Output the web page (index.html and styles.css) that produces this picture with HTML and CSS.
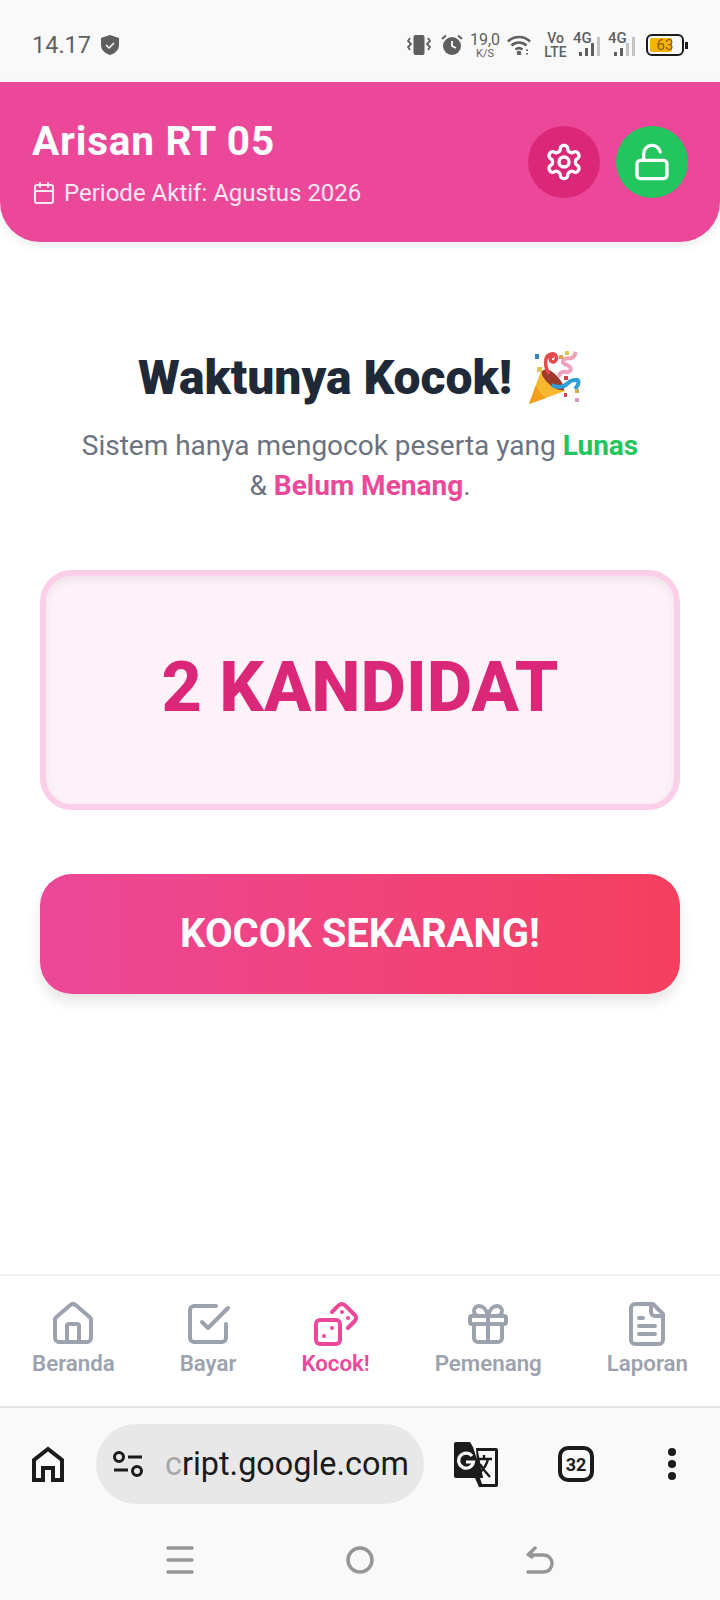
FILE: index.html
```html
<!DOCTYPE html>
<html lang="en">
<head>
    <meta charset="UTF-8">
    <meta name="viewport" content="width=device-width, initial-scale=1.0">
    <title>Arisan RT 05</title>
    <link rel="stylesheet" href="styles.css">
</head>
<body>
    <!-- android status bar -->
    <div class="status-bar">
        <div class="status-left">
            <span class="clock">14.17</span>
            <svg class="shield" viewBox="0 0 18 20"><path d="M9 0l9 3v7c0 5-4 8.500-9 10-5-1.500-9-5-9-10V3z" fill="#5f5f5f"/><path d="M5 10l3 3 5-5" fill="none" stroke="#fff" stroke-width="1.500"/></svg>
        </div>
        <div class="status-right">
            <svg class="st-vib" viewBox="0 0 24 22" fill="#5f5f5f"><rect x="6.500" y="1" width="11" height="20" rx="2"/><path d="M3 4L1 7l3 3-3 3 2 3M21 4l2 3-3 3 3 3-2 3" fill="none" stroke="#5f5f5f" stroke-width="1.800"/></svg>
            <svg class="st-alarm" viewBox="0 0 22 22"><circle cx="11" cy="12" r="9" fill="#5f5f5f"/><path d="M11 7v5l4 2" fill="none" stroke="#fff" stroke-width="1.800"/><path d="M1 5l4-3.500M21 5l-4-3.500" stroke="#5f5f5f" stroke-width="2"/></svg>
            <div class="st-speed"><span class="speed-num">19,0</span><span class="speed-unit">K/S</span></div>
            <svg class="st-wifi" viewBox="0 0 24 20" fill="none" stroke="#5f5f5f" stroke-width="2.600"><path d="M1 6.500c6-6 16-6 22 0"/><path d="M4.500 10.500c4.500-4 10.500-4 15 0"/><path d="M8.500 14.500c2-1.500 5-1.500 7 0"/><circle cx="12" cy="18" r="1" fill="#5f5f5f"/><path d="M20 14.500v1.500M20 18v1.500" stroke-width="2"/></svg>
            <div class="st-volte"><span>Vo</span><span>LTE</span></div>
            <div class="st-signal">
                <span class="net">4G</span>
                <svg viewBox="0 0 22 22"><rect x="0" y="17" width="3" height="4" fill="#5f5f5f"/><rect x="6" y="13" width="3" height="8" fill="#5f5f5f"/><rect x="12" y="8" width="3" height="13" fill="#5f5f5f"/><rect x="18" y="2" width="3" height="19" fill="#c4c4c4"/></svg>
            </div>
            <div class="st-signal">
                <span class="net">4G</span>
                <svg viewBox="0 0 22 22"><rect x="0" y="17" width="3" height="4" fill="#5f5f5f"/><rect x="6" y="13" width="3" height="8" fill="#5f5f5f"/><rect x="12" y="8" width="3" height="13" fill="#c4c4c4"/><rect x="18" y="2" width="3" height="19" fill="#c4c4c4"/></svg>
            </div>
            <div class="st-battery"><div class="batt-body"><div class="batt-fill"></div><span class="batt-num">63</span></div><div class="batt-tip"></div></div>
        </div>
    </div>

    <header class="app-header">
        <div>
            <h1 class="app-title">Arisan RT 05</h1>
            <div class="app-period">
                <svg class="lucide cal" viewBox="0 0 24 24"><rect width="18" height="18" x="3" y="4" rx="2"/><path d="M16 2v4"/><path d="M8 2v4"/><path d="M3 10h18"/></svg>
                <span>Periode Aktif: Agustus 2026</span>
            </div>
        </div>
        <div class="header-btns">
            <div class="round-btn btn-settings">
                <svg class="lucide" viewBox="0 0 24 24"><path d="M12.220 2h-.44a2 2 0 0 0-2 2v.18a2 2 0 0 1-1 1.730l-.43.25a2 2 0 0 1-2 0l-.15-.08a2 2 0 0 0-2.730.73l-.22.38a2 2 0 0 0 .73 2.730l.15.1a2 2 0 0 1 1 1.720v.51a2 2 0 0 1-1 1.740l-.15.09a2 2 0 0 0-.73 2.730l.22.38a2 2 0 0 0 2.730.73l.15-.08a2 2 0 0 1 2 0l.43.25a2 2 0 0 1 1 1.730V20a2 2 0 0 0 2 2h.44a2 2 0 0 0 2-2v-.18a2 2 0 0 1 1-1.730l.43-.25a2 2 0 0 1 2 0l.15.08a2 2 0 0 0 2.730-.73l.22-.39a2 2 0 0 0-.73-2.730l-.15-.08a2 2 0 0 1-1-1.740v-.5a2 2 0 0 1 1-1.740l.15-.09a2 2 0 0 0 .73-2.730l-.22-.38a2 2 0 0 0-2.730-.73l-.15.08a2 2 0 0 1-2 0l-.43-.25a2 2 0 0 1-1-1.730V4a2 2 0 0 0-2-2z"/><circle cx="12" cy="12" r="3"/></svg>
            </div>
            <div class="round-btn btn-lock">
                <svg class="lucide" viewBox="0 0 24 24"><rect width="18" height="11" x="3" y="11" rx="2" ry="2"/><path d="M7 11V7a5 5 0 0 1 9.900-1"/></svg>
            </div>
        </div>
    </header>

    <main class="draw-page">
        <div class="draw-heading">
            <h2>Waktunya Kocok!</h2>
            <svg class="popper" viewBox="0 0 54 56">
                <path d="M1 54L13 21c8 2 18 10 24 20z" fill="#f7b731"/>
                <path d="M1 54l7-19c2 5 5 10 10 13z" fill="#f29f1c"/>
                <path d="M14 21c4-3 9-1 14 4s9 11 8 15c-5 1-11-2-16-7s-7-9-6-12z" fill="#9c3b2a"/>
                <path d="M21 24c-3-5-4-10-3-15 1-5 8-7 10-3s-3 8-5 5 0-5 3-5" fill="none" stroke="#e5484d" stroke-width="3.500"/>
                <path d="M32 27c-2-4 3-6 6-5s6-2 4-5-8-2-7-6 7-2 9-3 3-3 4-6" fill="none" stroke="#efa3bb" stroke-width="4"/>
                <path d="M24 35c6 3 12 2 16-2s7-3 9-3c3 1 1 6-2 9" fill="none" stroke="#2f9fd8" stroke-width="4"/>
                <rect x="7" y="4" width="4" height="5" fill="#3b82c4"/>
                <rect x="9" y="17" width="5" height="5" fill="#e3c34f"/>
                <rect x="31" y="5" width="4" height="4" fill="#d8a24a"/>
                <rect x="37" y="1" width="4" height="4" fill="#e3c34f"/>
                <rect x="36" y="26" width="4" height="4" fill="#d6404a"/>
                <rect x="47" y="39" width="4" height="4" fill="#c9a95a"/>
                <rect x="36" y="43" width="3" height="4" fill="#d6404a"/>
                <rect x="47" y="48" width="4" height="4" fill="#d49ac0"/>
            </svg>
        </div>
        <p class="draw-sub">Sistem hanya mengocok peserta yang <b class="txt-green">Lunas</b><br>&amp; <b class="txt-pink">Belum Menang</b>.</p>
        <div class="candidate-card">2 KANDIDAT</div>
        <div class="draw-btn">KOCOK SEKARANG!</div>
    </main>

    <nav class="bottom-nav">
        <div class="nav-item">
            <svg class="lucide" viewBox="0 0 24 24"><path d="M15 21v-8a1 1 0 0 0-1-1h-4a1 1 0 0 0-1 1v8"/><path d="M3 10a2 2 0 0 1 .709-1.528l7-5.999a2 2 0 0 1 2.582 0l7 5.999A2 2 0 0 1 21 10v9a2 2 0 0 1-2 2H5a2 2 0 0 1-2-2z"/></svg>
            <span>Beranda</span>
        </div>
        <div class="nav-item">
            <svg class="lucide" viewBox="0 0 24 24"><path d="M9 11l3 3L22 4"/><path d="M21 12v7a2 2 0 0 1-2 2H5a2 2 0 0 1-2-2V5a2 2 0 0 1 2-2h11"/></svg>
            <span>Bayar</span>
        </div>
        <div class="nav-item active">
            <svg class="lucide" viewBox="0 0 24 24"><rect width="12" height="12" x="2" y="10" rx="2" ry="2"/><path d="m17.920 14 3.500-3.500a2.240 2.240 0 0 0 0-3l-5-4.920a2.240 2.240 0 0 0-3 0L10 6"/><path d="M6 18h.01"/><path d="M10 14h.01"/><path d="M15 6h.01"/><path d="M18 9h.01"/></svg>
            <span>Kocok!</span>
        </div>
        <div class="nav-item">
            <svg class="lucide" viewBox="0 0 24 24"><rect x="3" y="8" width="18" height="4" rx="1"/><path d="M12 8v13"/><path d="M19 12v7a2 2 0 0 1-2 2H7a2 2 0 0 1-2-2v-7"/><path d="M7.500 8a2.500 2.500 0 0 1 0-5A4.800 8 0 0 1 12 8a4.800 8 0 0 1 4.500-5 2.500 2.500 0 0 1 0 5"/></svg>
            <span>Pemenang</span>
        </div>
        <div class="nav-item">
            <svg class="lucide" viewBox="0 0 24 24"><path d="M15 2H6a2 2 0 0 0-2 2v16a2 2 0 0 0 2 2h12a2 2 0 0 0 2-2V7Z"/><path d="M14 2v4a2 2 0 0 0 2 2h4"/><path d="M10 9H8"/><path d="M16 13H8"/><path d="M16 17H8"/></svg>
            <span>Laporan</span>
        </div>
    </nav>

    <!-- browser toolbar -->
    <div class="browser-bar">
        <svg class="br-home" viewBox="0 0 32 36" fill="none" stroke="#1b1b1b" stroke-width="4"><path d="M2 34V14L16 3l14 11v20h-9V22H11v12z"/></svg>
        <div class="url-pill">
            <svg class="url-tune" viewBox="0 0 30 26" fill="none" stroke="#1b1b1b" stroke-width="3"><circle cx="6" cy="6" r="4.500"/><path d="M15 6h14M1 19h14"/><circle cx="24" cy="20" r="4.500"/></svg>
            <span class="url-text"><span class="url-fade">c</span>ript.google.com</span>
        </div>
        <svg class="br-translate" viewBox="0 0 44 45">
            <path d="M22 6h20a2 2 0 0 1 2 2v35a2 2 0 0 1-2 2H25l-4-9h3z" fill="#1b1b1b"/>
            <path d="M24 9h17v33H28l-2-6h3z" fill="#f9f9f9"/>
            <path d="M2 0h14l3 5 10 31H2a2 2 0 0 1-2-2V2a2 2 0 0 1 2-2z" fill="#1b1b1b"/>
            <path d="M18 14a7.500 7.500 0 1 0 1.500 6H12" fill="none" stroke="#f9f9f9" stroke-width="3.200"/>
            <path d="M23 17h15M30 13v4M34 17c-1 5-4 10-9 14M26 22c3 5 6 9 10 13" fill="none" stroke="#1b1b1b" stroke-width="2.400"/>
        </svg>
        <div class="br-tabs">32</div>
        <div class="br-menu"><i></i><i></i><i></i></div>
    </div>

    <div class="gesture-bar">
        <svg class="ges-icon" viewBox="0 0 28 28" fill="none" stroke="#969696" stroke-width="3.500" stroke-linecap="round"><path d="M2 2h24M2 14h24M2 26h24"/></svg>
        <svg class="ges-icon" viewBox="0 0 28 28" fill="none" stroke="#969696" stroke-width="3.500"><circle cx="14" cy="14" r="12"/></svg>
        <svg class="ges-icon" viewBox="0 0 28 28" fill="none" stroke="#969696" stroke-width="3.500" stroke-linecap="round"><path d="M2 26h15c12 0 12-17 0-17H3"/><path d="M9 2L2.500 8.500 6 11"/></svg>
    </div>
</body>
</html>
```

FILE: styles.css
```css
* {
    box-sizing: border-box;
}
body {
    font-family: Roboto, Arial, sans-serif;
    background: white;
    margin: 0;
    width: 720px;
    height: 1600px;
    display: flex;
    flex-direction: column;
    overflow: hidden;
}
.lucide {
    fill: none;
    stroke: currentColor;
    stroke-width: 2;
    stroke-linecap: round;
    stroke-linejoin: round;
}

/* status bar */
.status-bar {
    height: 82px;
    flex-shrink: 0;
    background: #f9f9f9;
    display: flex;
    justify-content: space-between;
    align-items: center;
    padding: 8px 32px 0 32px;
    color: #5f5f5f;
}
.status-left {
    display: flex;
    align-items: center;
    gap: 10px;
}
.clock {
    font-size: 23.5px;
}
.shield {
    width: 18px;
    height: 20px;
}
.status-right {
    display: flex;
    align-items: center;
}
.st-vib {
    width: 24px;
    height: 22px;
}
.st-alarm {
    width: 22px;
    height: 22px;
    margin-left: 10px;
}
.st-speed {
    margin-left: 8px;
    width: 28px;
    display: flex;
    flex-direction: column;
    align-items: center;
    line-height: 1;
}
.speed-num {
    font-size: 16px;
}
.speed-unit {
    font-size: 11px;
}
.st-wifi {
    width: 24px;
    height: 20px;
    margin-left: 8px;
}
.st-volte {
    margin-left: 14px;
    width: 21px;
    display: flex;
    flex-direction: column;
    align-items: center;
    font-size: 14px;
    font-weight: 500;
    line-height: 1;
}
.st-signal {
    position: relative;
    width: 28px;
    height: 24px;
    margin-left: 7px;
}
.st-signal svg {
    position: absolute;
    right: 0;
    bottom: 0;
    width: 22px;
    height: 22px;
}
.net {
    position: absolute;
    left: 0;
    top: -2px;
    font-size: 15px;
    font-weight: 500;
    line-height: 1;
}
.st-battery {
    display: flex;
    align-items: center;
    margin-left: 10px;
}
.batt-body {
    position: relative;
    width: 38px;
    height: 22px;
    border: 2px solid #1b1b1b;
    border-radius: 6px;
    padding: 2px;
}
.batt-fill {
    width: 72%;
    height: 100%;
    background: #f9b208;
    border-radius: 2px;
}
.batt-num {
    position: absolute;
    inset: 0;
    text-align: center;
    font-size: 15px;
    line-height: 18px;
    color: #8a5a00;
}
.batt-tip {
    width: 3px;
    height: 7px;
    background: #1b1b1b;
    margin-left: 1px;
}

/* header */
.app-header {
    height: 160px;
    flex-shrink: 0;
    background: #ec4899;
    border-radius: 0 0 40px 40px;
    box-shadow: 0 4px 10px rgba(0, 0, 0, 0.08);
    display: flex;
    justify-content: space-between;
    align-items: center;
    padding: 0 32px;
    color: white;
    position: relative;
}
.app-title {
    margin: 0;
    font-size: 40.5px;
    font-weight: 700;
    letter-spacing: 0.8px;
    line-height: 48px;
}
.app-period {
    display: flex;
    align-items: center;
    gap: 8px;
    margin-top: 14px;
    font-size: 24px;
    line-height: 28px;
    color: #fce7f3;
}
.cal {
    width: 24px;
    height: 24px;
}
.header-btns {
    display: flex;
    gap: 16px;
}
.round-btn {
    width: 72px;
    height: 72px;
    border-radius: 50%;
    display: flex;
    align-items: center;
    justify-content: center;
}
.round-btn svg {
    width: 40px;
    height: 40px;
}
.btn-settings {
    background: #db2777;
}
.btn-lock {
    background: #22c55e;
}

/* main area */
.draw-page {
    flex: 1;
    display: flex;
    flex-direction: column;
    align-items: center;
    padding: 106px 40px 0;
}
.draw-heading {
    display: flex;
    align-items: center;
    gap: 16px;
}
.draw-heading h2 {
    margin: 0;
    font-size: 48px;
    font-weight: 900;
    line-height: 60px;
    color: #1f2937;
}
.popper {
    width: 54px;
    height: 56px;
}
.draw-sub {
    margin: 18px 0 0;
    text-align: center;
    font-size: 28px;
    line-height: 40px;
    color: #6b7280;
}
.txt-green {
    color: #22c55e;
}
.txt-pink {
    color: #ec4899;
}
.candidate-card {
    width: 100%;
    height: 240px;
    margin-top: 64px;
    padding-bottom: 6px;
    display: flex;
    align-items: center;
    justify-content: center;
    background: #fdf2f8;
    border: 6px solid #fbcfe8;
    border-radius: 32px;
    box-shadow: inset 0 4px 8px rgba(0, 0, 0, 0.06);
    font-size: 70px;
    font-weight: 800;
    color: #db2777;
}
.draw-btn {
    width: 100%;
    height: 120px;
    margin-top: 64px;
    padding-bottom: 2px;
    display: flex;
    align-items: center;
    justify-content: center;
    background: linear-gradient(90deg, #ec4899, #f43f5e);
    border-radius: 32px;
    box-shadow: 0 8px 14px rgba(0, 0, 0, 0.1);
    font-size: 40px;
    font-weight: 700;
    color: white;
}

/* bottom nav */
.bottom-nav {
    height: 134px;
    flex-shrink: 0;
    display: flex;
    justify-content: space-between;
    padding: 24px 32px 0 32px;
    background: white;
    border-top: 2px solid #f3f4f6;
    border-bottom: 2px solid #e5e5e5;
}
.nav-item {
    display: flex;
    flex-direction: column;
    align-items: center;
    gap: 2px;
    color: #9ca3af;
    font-size: 22.3px;
    font-weight: 600;
}
.nav-item svg {
    width: 48px;
    height: 48px;
}
.nav-item.active {
    color: #ec4899;
}

/* browser chrome */
.browser-bar {
    height: 112px;
    flex-shrink: 0;
    background: #f9f9f9;
    display: flex;
    align-items: center;
    padding: 0 0 0 32px;
}
.br-home {
    width: 32px;
    height: 36px;
}
.url-pill {
    width: 328px;
    height: 80px;
    margin-left: 32px;
    background: #e8e8e8;
    border-radius: 40px;
    display: flex;
    align-items: center;
    padding-left: 17px;
}
.url-tune {
    width: 30px;
    height: 26px;
}
.url-text {
    margin-left: 22px;
    font-family: Roboto, sans-serif;
    font-size: 32.4px;
    color: #1b1b1b;
    white-space: nowrap;
}
.url-fade {
    color: #a8a8a8;
}
.br-translate {
    width: 44px;
    height: 45px;
    margin-left: 30px;
}
.br-tabs {
    width: 36px;
    height: 36px;
    margin-left: 60px;
    border: 4px solid #1b1b1b;
    border-radius: 10px;
    display: flex;
    align-items: center;
    justify-content: center;
    font-size: 18px;
    font-weight: 700;
    color: #1b1b1b;
}
.br-menu {
    display: flex;
    flex-direction: column;
    gap: 4px;
    margin-left: 74px;
}
.br-menu i {
    width: 8px;
    height: 8px;
    border-radius: 50%;
    background: #1b1b1b;
}
.gesture-bar {
    height: 80px;
    flex-shrink: 0;
    background: #f9f9f9;
    display: flex;
    justify-content: center;
    gap: 152px;
    padding-top: 26px;
}
.ges-icon {
    width: 28px;
    height: 28px;
}
```
